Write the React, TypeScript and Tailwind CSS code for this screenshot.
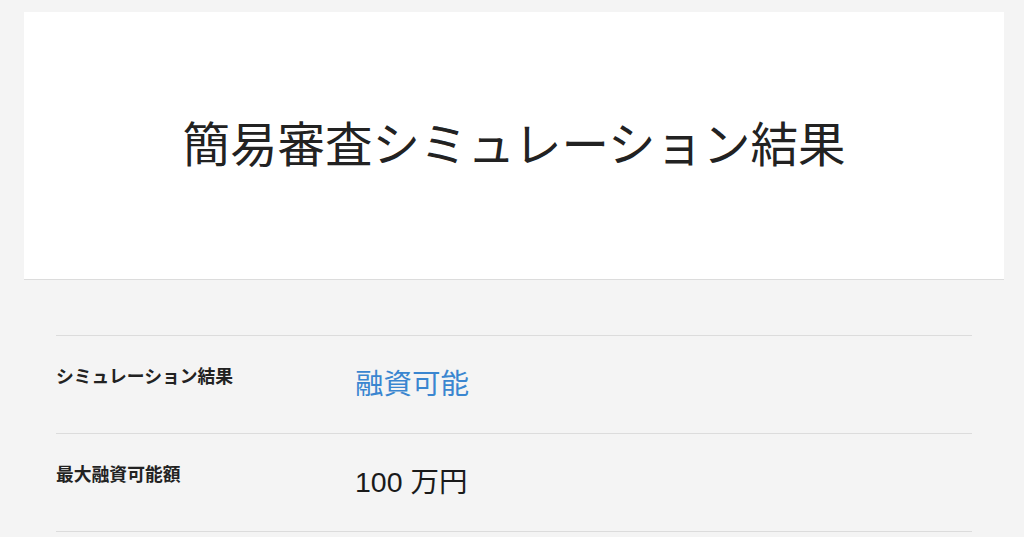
const font = {
  fontFamily: '"Liberation Sans", "Noto Sans CJK JP", sans-serif',
};

type Row = {
  label: string;
  value: string;
  accent?: boolean;
};

const rows: Row[] = [
  { label: "シミュレーション結果", value: "融資可能", accent: true },
  { label: "最大融資可能額", value: "100 万円" },
];

export default function App() {
  return (
    <div className="min-h-[537px] bg-[#f4f4f4] pl-6 pr-5 pt-3 text-[#222]" style={font}>
      <div className="flex h-[268px] items-center justify-center border-b border-[#dcdcdc] bg-white">
        <h1 className="text-[47.5px] font-normal leading-none">簡易審査シミュレーション結果</h1>
      </div>

      <dl className="mx-8 mt-[55px] border-t border-[#dcdcdc]">
        {rows.map((row) => (
          <div key={row.label} className="flex h-[98px] border-b border-[#dcdcdc]">
            <dt className="w-[299px] pt-[31px] text-[17.8px] font-bold leading-[20px]">
              {row.label}
            </dt>
            <dd
              className={
                row.accent
                  ? "pt-[32px] text-[28.5px] leading-[32px] text-[#3a86d0]"
                  : "pt-[32px] text-[28.5px] leading-[32px] text-[#1a1a1a]"
              }
            >
              {row.value}
            </dd>
          </div>
        ))}
      </dl>
    </div>
  );
}
